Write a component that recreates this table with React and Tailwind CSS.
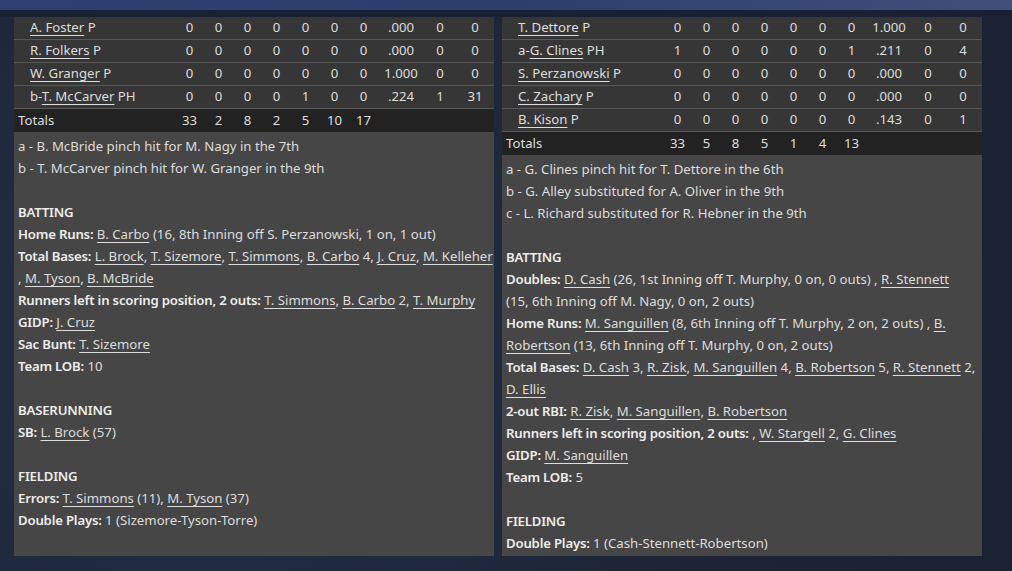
import React from 'react'

const FONT = { fontFamily: '"Noto Sans", "Open Sans", sans-serif' }

const awayRows = [
  { pre: '', name: 'A. Foster', pos: 'P', s: [0, 0, 0, 0, 0, 0, 0, '.000', 0, 0] },
  { pre: '', name: 'R. Folkers', pos: 'P', s: [0, 0, 0, 0, 0, 0, 0, '.000', 0, 0] },
  { pre: '', name: 'W. Granger', pos: 'P', s: [0, 0, 0, 0, 0, 0, 0, '1.000', 0, 0] },
  { pre: 'b-', name: 'T. McCarver', pos: 'PH', s: [0, 0, 0, 0, 1, 0, 0, '.224', 1, 31] },
]
const awayTotals = [33, 2, 8, 2, 5, 10, 17]

const homeRows = [
  { pre: '', name: 'T. Dettore', pos: 'P', s: [0, 0, 0, 0, 0, 0, 0, '1.000', 0, 0] },
  { pre: 'a-', name: 'G. Clines', pos: 'PH', s: [1, 0, 0, 0, 0, 0, 1, '.211', 0, 4] },
  { pre: '', name: 'S. Perzanowski', pos: 'P', s: [0, 0, 0, 0, 0, 0, 0, '.000', 0, 0] },
  { pre: '', name: 'C. Zachary', pos: 'P', s: [0, 0, 0, 0, 0, 0, 0, '.000', 0, 0] },
  { pre: '', name: 'B. Kison', pos: 'P', s: [0, 0, 0, 0, 0, 0, 0, '.143', 0, 1] },
]
const homeTotals = [33, 5, 8, 5, 1, 4, 13]

const GRID = 'grid grid-cols-[161px_repeat(7,29px)_46px_32px_1fr] items-center'

function L({ children }) {
  return <span className="underline underline-offset-[3px] decoration-1">{children}</span>
}

function B({ children }) {
  return <span className="font-semibold tracking-[-0.2px] text-[#ededed]">{children}</span>
}

function PlayerRow({ row }) {
  return (
    <div className={`${GRID} h-[23px] border-b border-[#585858] bg-[#363636]`}>
      <div className="pl-4 whitespace-nowrap">
        {row.pre}<L>{row.name}</L> {row.pos}
      </div>
      {row.s.map((v, i) => (
        <div key={i} className="text-center">{v}</div>
      ))}
    </div>
  )
}

function TotalsRow({ totals }) {
  return (
    <div className={`${GRID} h-[23px] bg-[#222222]`}>
      <div className="pl-1">Totals</div>
      {totals.map((v, i) => (
        <div key={i} className="text-center">{v}</div>
      ))}
    </div>
  )
}

function Line({ children }) {
  return <div className="min-h-[22px]">{children}</div>
}

function AwayNotes() {
  return (
    <div className="px-1 pt-[3px] leading-[22px]">
      <Line>a - B. McBride pinch hit for M. Nagy in the 7th</Line>
      <Line>b - T. McCarver pinch hit for W. Granger in the 9th</Line>
      <Line />
      <Line><B>BATTING</B></Line>
      <Line><B>Home Runs:</B> <L>B. Carbo</L> (16, 8th Inning off S. Perzanowski, 1 on, 1 out)</Line>
      <Line>
        <B>Total Bases:</B> <L>L. Brock</L>, <L>T. Sizemore</L>, <L>T. Simmons</L>, <L>B. Carbo</L> 4, <L>J. Cruz</L>, <L>M. Kelleher</L>
        <br />, <L>M. Tyson</L>, <L>B. McBride</L>
      </Line>
      <Line><B>Runners left in scoring position, 2 outs:</B> <L>T. Simmons</L>, <L>B. Carbo</L> 2, <L>T. Murphy</L></Line>
      <Line><B>GIDP:</B> <L>J. Cruz</L></Line>
      <Line><B>Sac Bunt:</B> <L>T. Sizemore</L></Line>
      <Line><B>Team LOB:</B> 10</Line>
      <Line />
      <Line><B>BASERUNNING</B></Line>
      <Line><B>SB:</B> <L>L. Brock</L> (57)</Line>
      <Line />
      <Line><B>FIELDING</B></Line>
      <Line><B>Errors:</B> <L>T. Simmons</L> (11), <L>M. Tyson</L> (37)</Line>
      <Line><B>Double Plays:</B> 1 (Sizemore-Tyson-Torre)</Line>
    </div>
  )
}

function HomeNotes() {
  return (
    <div className="px-1 pt-[3px] leading-[22px]">
      <Line>a - G. Clines pinch hit for T. Dettore in the 6th</Line>
      <Line>b - G. Alley substituted for A. Oliver in the 9th</Line>
      <Line>c - L. Richard substituted for R. Hebner in the 9th</Line>
      <Line />
      <Line><B>BATTING</B></Line>
      <Line>
        <B>Doubles:</B> <L>D. Cash</L> (26, 1st Inning off T. Murphy, 0 on, 0 outs) , <L>R. Stennett</L>
        <br />(15, 6th Inning off M. Nagy, 0 on, 2 outs)
      </Line>
      <Line>
        <B>Home Runs:</B> <L>M. Sanguillen</L> (8, 6th Inning off T. Murphy, 2 on, 2 outs) , <L>B.</L>
        <br /><L>Robertson</L> (13, 6th Inning off T. Murphy, 0 on, 2 outs)
      </Line>
      <Line>
        <B>Total Bases:</B> <L>D. Cash</L> 3, <L>R. Zisk</L>, <L>M. Sanguillen</L> 4, <L>B. Robertson</L> 5, <L>R. Stennett</L> 2,
        <br /><L>D. Ellis</L>
      </Line>
      <Line><B>2-out RBI:</B> <L>R. Zisk</L>, <L>M. Sanguillen</L>, <L>B. Robertson</L></Line>
      <Line><B>Runners left in scoring position, 2 outs:</B> , <L>W. Stargell</L> 2, <L>G. Clines</L></Line>
      <Line><B>GIDP:</B> <L>M. Sanguillen</L></Line>
      <Line><B>Team LOB:</B> 5</Line>
      <Line />
      <Line><B>FIELDING</B></Line>
      <Line><B>Double Plays:</B> 1 (Cash-Stennett-Robertson)</Line>
    </div>
  )
}

export default function App() {
  return (
    <div
      className="w-[1012px] h-[571px] overflow-hidden bg-[radial-gradient(circle_at_20%_60%,#24304a_0%,#1d2536_55%,#1a2132_100%)] text-[#dddddd] text-[13.2px] whitespace-nowrap"
      style={FONT}
    >
      <div className="h-[10px] bg-gradient-to-r from-[#2e4170] via-[#2c3e6c] to-[#3f507a]" />
      <div className="h-[7px] bg-[#192033]" />
      <div className="flex gap-2 pl-[14px] h-[539px]">
        <div className="w-[480px] flex flex-col">
          {awayRows.map((r, i) => <PlayerRow key={i} row={r} />)}
          <TotalsRow totals={awayTotals} />
          <div className="flex-1 bg-[#464646]">
            <AwayNotes />
          </div>
        </div>
        <div className="w-[480px] flex flex-col">
          {homeRows.map((r, i) => <PlayerRow key={i} row={r} />)}
          <TotalsRow totals={homeTotals} />
          <div className="flex-1 bg-[#464646]">
            <HomeNotes />
          </div>
        </div>
      </div>
    </div>
  )
}
